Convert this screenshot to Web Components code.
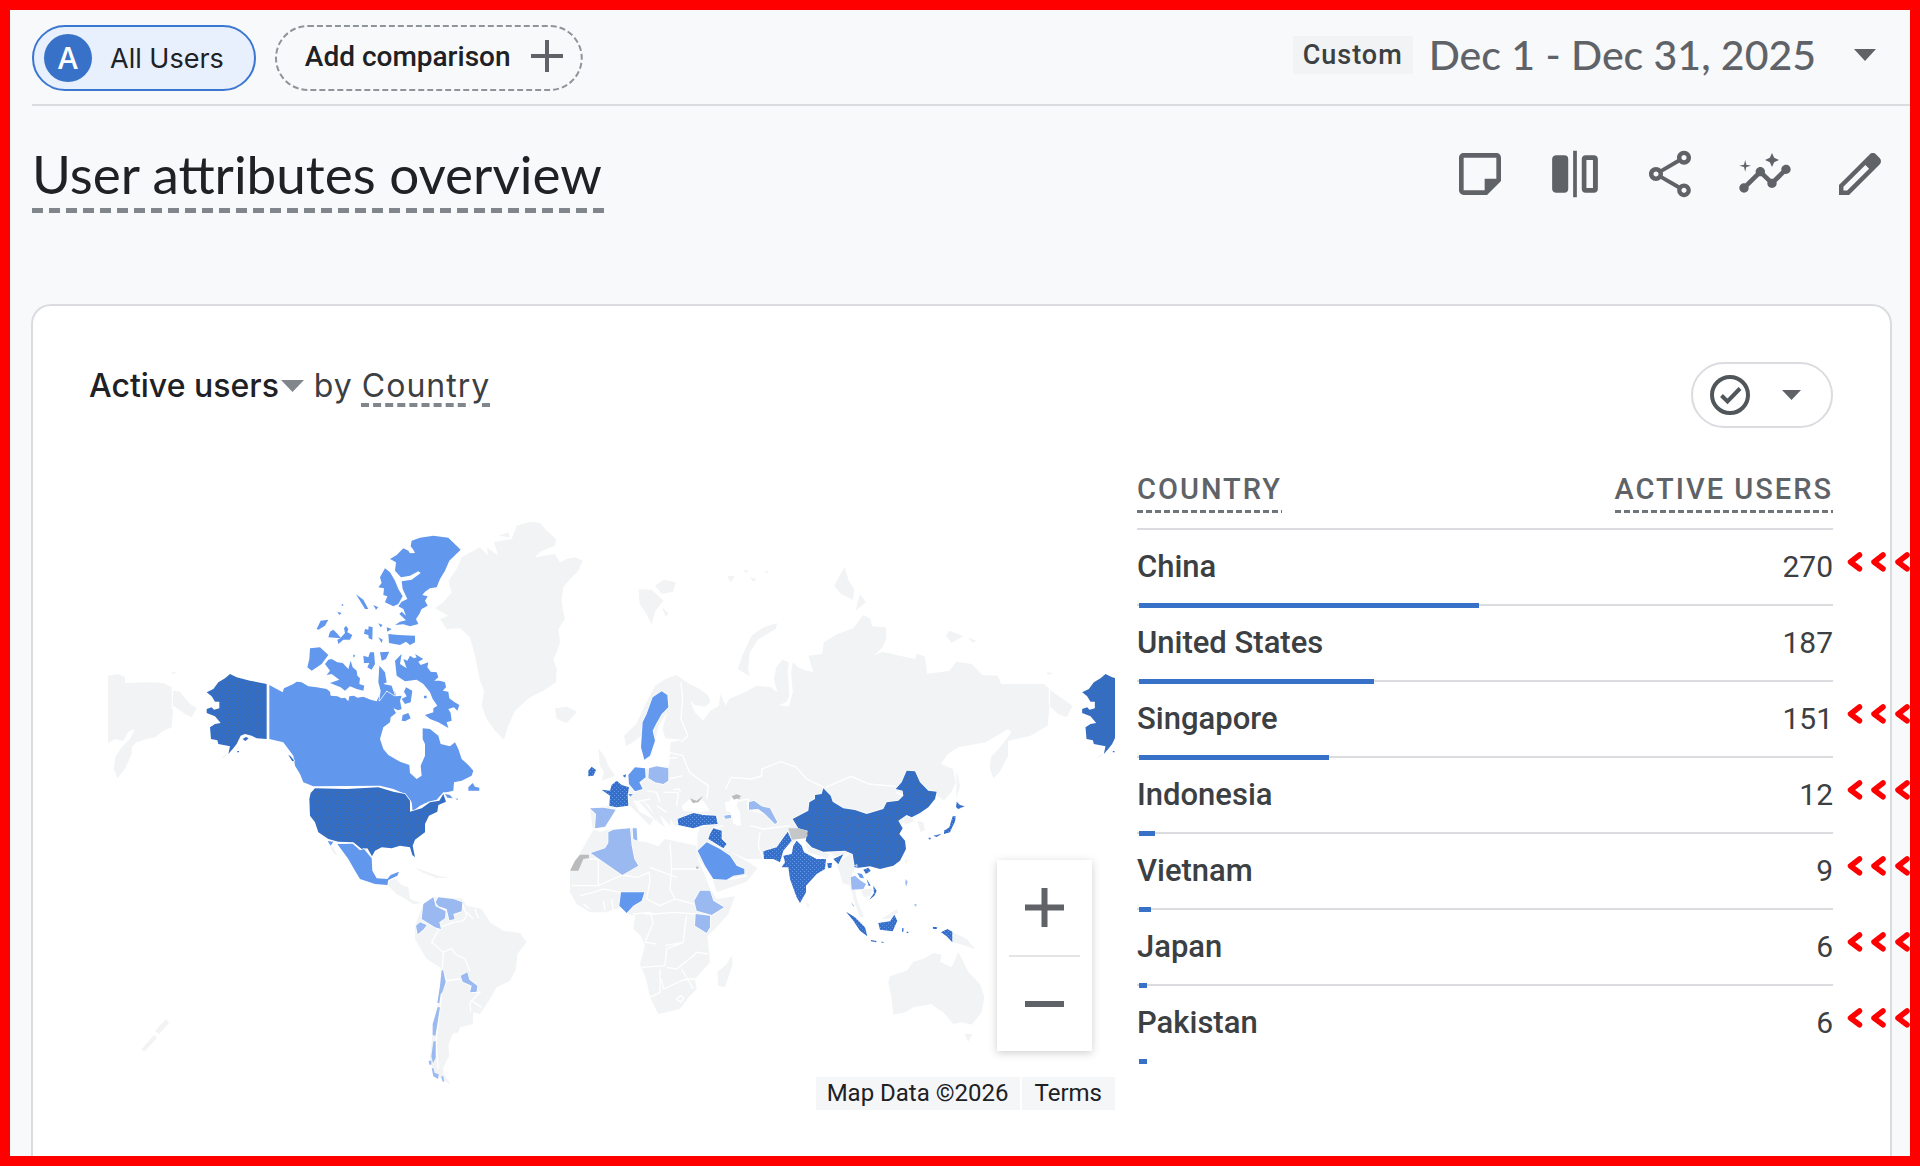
<!DOCTYPE html>
<html lang="en">
<head>
<meta charset="utf-8">
<title>User attributes overview</title>
<style>
html,body{margin:0;height:100%}
body{font-family:Roboto,"Liberation Sans",sans-serif;color:#202124}
</style>
</head>
<body>
<ga-page>
  <ga-topbar slot="top">
    <ga-chip slot="chips" initial="A">All Users</ga-chip>
    <ga-chip slot="chips" add>Add comparison</ga-chip>
    <ga-date-range label="Custom">Dec 1 - Dec 31, 2025</ga-date-range>
  </ga-topbar>
  <ga-title-row slot="top">User attributes overview</ga-title-row>
  <ga-card metric="Active users" dimension="Country">
    <ga-map slot="map"></ga-map>
    <ga-table slot="table"></ga-table>
  </ga-card>
</ga-page>

<script>
const define = (name, html, init) => {
  const template = document.createElement('template');
  template.innerHTML = '<style>*{box-sizing:border-box}button{font:inherit;color:inherit;background:none;border:0;padding:0;margin:0;cursor:pointer}svg{display:block}</style>' + html;
  customElements.define(name, class extends HTMLElement {
    constructor() {
      super();
      this.attachShadow({mode: 'open'}).append(template.content.cloneNode(true));
    }
    connectedCallback() { if (init) init(this, this.shadowRoot); }
  });
};

define('ga-page', `
<style>
:host{display:flex;flex-direction:column;min-height:100vh;border:10px solid #f00;background:#f8f9fb;box-sizing:border-box}
main{flex:1;display:flex;flex-direction:column}
</style>
<slot name="top"></slot><main><slot></slot></main>`);

define('ga-topbar', `
<style>
:host{display:flex;justify-content:space-between;align-items:flex-start;height:96px;margin-left:22px;padding-top:15px;border-bottom:2px solid #dadce0;box-sizing:border-box}
.chips{display:flex;gap:19px}
</style>
<div class="chips"><slot name="chips"></slot></div><slot></slot>`);

define('ga-chip', `
<style>
:host{display:block}
button{display:flex;align-items:center;height:66px;border-radius:33px;font-size:28px;font-weight:500;color:#202124}
.user{border:2px solid #3b76d0;background:#e8f0fe;padding:0 30px 0 10px;gap:18px;font:400 27px Inter,sans-serif}
.user b{display:grid;place-items:center;width:48px;height:48px;border-radius:50%;background:#3871c8;color:#fff;font:500 30px Inter,sans-serif}
svg.ring{position:absolute;inset:0;width:100%;height:100%;overflow:visible}
.add{position:relative;padding:0 20px 4px 30px;gap:20px}
</style>
<button type="button"><slot></slot></button>`, (host, root) => {
  const button = root.querySelector('button');
  if (host.hasAttribute('add')) {
    button.className = 'add';
    button.insertAdjacentHTML('beforeend', '<svg width="32" height="32" viewBox="0 0 32 32"><path d="M16 0V32M0 16H32" stroke="#5f6368" stroke-width="4"/></svg><svg class="ring" viewBox="0 0 308 66" preserveAspectRatio="none"><rect x="1" y="1" width="306" height="64" rx="32" fill="none" stroke="#8f9499" stroke-width="2" stroke-dasharray="6 3"/></svg>');
  } else {
    button.className = 'user';
    const badge = document.createElement('b');
    badge.textContent = host.getAttribute('initial');
    button.prepend(badge);
  }
});

define('ga-date-range', `
<style>
:host{display:block;padding-right:34px}
button{display:flex;align-items:center;height:62px;padding-bottom:2px;color:#5f6368}
.tag{padding:0 10px;line-height:38px;margin-right:16px;background:#f1f3f4;color:#3c4043;font-size:27px;font-weight:500;letter-spacing:1px}
.date{font:500 41px/50px Lato,sans-serif}
svg{margin-left:38px}
</style>
<button type="button"><span class="tag"></span><span class="date"><slot></slot></span><svg width="22" height="12" viewBox="0 0 22 12"><path d="M0 0H22L11 12Z" fill="#5f6368"/></svg></button>`,
(host, root) => { root.querySelector('.tag').textContent = host.getAttribute('label'); });

define('ga-title-row', `
<style>
:host{display:flex;justify-content:space-between;align-items:flex-start;height:198px;padding:36px 22px 0 22px;box-sizing:border-box;color:#202124}
h1{margin:0;padding:0 3px 7px 0;font:400 53px/64px Lato,sans-serif;background:repeating-linear-gradient(90deg,#80868b 0 11px,transparent 11px 17px) left bottom/100% 5px no-repeat}
nav{display:flex;gap:39px;padding-top:4px}
button{width:56px;height:56px}
svg{width:56px;height:56px;fill:#5f6368}
</style>
<h1><slot></slot></h1>
<nav>
<button type="button" aria-label="Notes"><svg viewBox="0 0 24 24"><path d="M19 5v9h-5v5H5V5h14m0-2H5c-1.1 0-2 .9-2 2v14c0 1.100.9 2 2 2h10l6-6V5c0-1.100-.9-2-2-2z"/></svg></button>
<button type="button" aria-label="Compare"><svg viewBox="0 0 24 24"><path d="M11.200 2h1.600v20h-1.600zM4 4h3.500c1 0 1.600.7 1.600 1.600v12.800c0 1-.7 1.600-1.600 1.600H4c-1 0-1.800-.7-1.800-1.600V5.600C2.200 4.700 3 4 4 4zM16.500 4h3.600c1 0 1.700.7 1.700 1.600v12.800c0 1-.7 1.600-1.700 1.600h-3.600c-1 0-1.600-.7-1.600-1.600V5.600c0-.9.7-1.600 1.600-1.600zm.4 2v12h2.800V6z" fill-rule="evenodd"/></svg></button>
<button type="button" aria-label="Share"><svg viewBox="0 0 24 24"><path d="M18 16.080c-.76 0-1.440.3-1.960.77L8.910 12.700c.05-.23.09-.46.09-.7s-.04-.47-.09-.7l7.050-4.110c.54.5 1.250.81 2.040.81 1.660 0 3-1.340 3-3s-1.340-3-3-3-3 1.340-3 3c0 .24.040.47.09.7L8.040 9.810C7.500 9.310 6.790 9 6 9c-1.660 0-3 1.340-3 3s1.340 3 3 3c.79 0 1.500-.31 2.040-.81l7.120 4.160c-.05.21-.08.43-.08.65 0 1.610 1.310 2.920 2.920 2.920s2.920-1.310 2.920-2.920-1.310-2.920-2.920-2.920zM18 3.900c.6 0 1.100.5 1.100 1.100s-.5 1.100-1.100 1.100-1.100-.5-1.100-1.100.5-1.100 1.100-1.100zM6 13.100c-.6 0-1.100-.5-1.100-1.100s.5-1.100 1.100-1.100 1.100.5 1.100 1.100-.5 1.100-1.100 1.100zm12 7c-.6 0-1.100-.5-1.100-1.100s.5-1.100 1.100-1.100 1.100.5 1.100 1.100-.5 1.100-1.100 1.100z"/></svg></button>
<button type="button" aria-label="Insights"><svg viewBox="0 0 24 24"><path d="M21 8c-1.450 0-2.260 1.440-1.930 2.510l-3.550 3.560c-.3-.09-.74-.09-1.040 0l-2.550-2.550C12.270 10.450 11.460 9 10 9c-1.450 0-2.270 1.440-1.930 2.520l-4.560 4.550C2.440 15.740 1 16.550 1 18c0 1.100.9 2 2 2 1.450 0 2.260-1.440 1.930-2.510l4.550-4.560c.3.090.74.090 1.040 0l2.550 2.550C12.730 16.550 13.540 18 15 18c1.450 0 2.270-1.440 1.930-2.520l3.560-3.550C21.560 12.260 23 11.450 23 10c0-1.100-.9-2-2-2zM15 9l.94-2.070L18 6l-2.060-.93L15 3l-.92 2.070L12 6l2.080.93zM3.500 11L4 9l2-.5L4 8l-.5-2L3 8l-2 .5L3 9z"/></svg></button>
<button type="button" aria-label="Edit"><svg viewBox="0 0 24 24"><path d="M3 21v-4.300L16.100 3.600c.8-.8 2-.8 2.800 0l1.500 1.500c.8.8.8 2 0 2.800L7.300 21zM4.900 19.100h1.600L15.900 9.700l-1.600-1.600-9.400 9.400z" fill-rule="evenodd"/></svg></button>
</nav>`);

define('ga-card', `
<style>
:host{flex:1;display:block;margin:0 18px 0 21px;padding:56px 57px 0 56px;border:2px solid #dadce0;border-bottom:0;border-radius:20px 20px 0 0;background:#fff;box-sizing:border-box}
header{display:flex;justify-content:space-between;align-items:flex-start}
h2{display:flex;align-items:center;margin:0;font:400 32px/48px Inter,sans-serif;color:#3c4043}
h2 button{display:flex;align-items:center;gap:2px;font-weight:500;color:#202124}
.by,.dim{letter-spacing:1px}
.by{margin:0 9px 0 10px}
.dim{text-decoration:underline dashed #80868b 4px;text-underline-offset:6px}
.state{display:flex;align-items:center;height:66px;width:142px;padding:0 30px 0 16px;justify-content:space-between;border:2px solid #dadce0;border-radius:34px}
.grid{display:grid;grid-template-columns:1007fr 696fr;gap:22px;margin-left:19px}
</style>
<header>
<h2><button type="button"><span class="metric"></span><svg width="23" height="12" viewBox="0 0 23 12"><path d="M0 0H23L11.500 12Z" fill="#80868b"/></svg></button><span class="by">by</span><span class="dim"></span></h2>
<button class="state" type="button" aria-label="Data quality"><svg width="42" height="42" viewBox="0 0 42 42" fill="none" stroke="#50565a" stroke-width="4"><circle cx="21" cy="21" r="18"/><path d="M12.500 21.500L18.500 27.500L31 14.500"/></svg><svg width="19" height="10" viewBox="0 0 19 10"><path d="M0 0H19L9.500 10Z" fill="#5f6368"/></svg></button>
</header>
<div class="grid"><slot name="map"></slot><slot name="table"></slot></div>`, (host, root) => {
  root.querySelector('.metric').textContent = host.getAttribute('metric');
  root.querySelector('.dim').textContent = host.getAttribute('dimension');
});

define('ga-table', `
<style>
:host{display:block}
table{width:100%;border-collapse:separate;border-spacing:0;color:#3c4043}
th,td{padding:0;text-align:left;border-bottom:2px solid #dadce0;vertical-align:top}
th:last-child,td{text-align:right}
thead th{height:102px;padding-top:44px;font-size:29px;line-height:34px;font-weight:500;letter-spacing:2px;color:#5f6368}
thead span{display:inline-block;padding-bottom:7px;background:repeating-linear-gradient(90deg,#70757a 0 6px,transparent 6px 9px) left bottom/100% 3px no-repeat}
tbody tr{position:relative}
tbody th,tbody td{height:76px;padding-top:17px;font-size:30px;line-height:40px}
tbody th{font-size:31px;font-weight:500}
tbody td{font-weight:400}
tbody tr:last-child>*{border-bottom-color:transparent}
.bar{position:absolute;left:2px;bottom:-2px;height:5px;background:#3871c8}
.mark{position:absolute;left:calc(100% + 14px);top:22px;overflow:visible}
</style>
<table><thead><tr><th scope="col"><span>COUNTRY</span></th><th scope="col"><span>ACTIVE USERS</span></th></tr></thead><tbody></tbody></table>`, (host, root) => {
  const rows = [['China', 270, 340, 1], ['United States', 187, 235, 0], ['Singapore', 151, 190, 1], ['Indonesia', 12, 16, 1], ['Vietnam', 9, 12, 1], ['Japan', 6, 8, 1], ['Pakistan', 6, 8, 1]];
  const mark = '<svg class="mark" width="64" height="20" viewBox="0 0 64 20" fill="none" stroke="#f00" stroke-width="5.500" stroke-linecap="round" stroke-linejoin="round"><path d="M12.500 3L3.500 10L12.500 16.800M36 3L27 10L36 16.800M60 3L51 10L60 16.800"/></svg>';
  root.querySelector('tbody').innerHTML = rows.map(([name, users, share, flag]) =>
    `<tr><th scope="row">${name}<div class="bar" style="width:calc(100% * ${share} / 696)"></div></th><td>${users}${flag ? mark : ''}</td></tr>`).join('');
});

define('ga-map', `
<style>
:host{display:block;position:relative}
.world{width:100%;height:auto;overflow:hidden}
.zoom{position:absolute;right:23px;top:432px;width:95px;padding:0 12px;background:#fff;box-shadow:0 2px 8px rgba(60,64,67,.25)}
.zoom button{display:grid;place-items:center;width:100%;height:95px}
.zoom button+button{border-top:2px solid #e4e5e7;height:96px}
.legal{position:absolute;right:0;bottom:0;display:flex;gap:2px;font-size:24px;line-height:33px;color:#202124}
.legal>*{background:#f5f6f8;padding:0 11px;color:inherit;text-decoration:none}
.legal a{padding:0 13px}
.g{fill:#f1f3f4}.c{fill:#6297ee}.l{fill:#99b9f0}.u{fill:url(#dots-dark)}.d{fill:url(#dots-light)}.b{fill:none!important;stroke:#fff;stroke-width:4}
.n{fill:#c4c6c8}
.c,.l,.u,.d{stroke:#fff;stroke-width:4;paint-order:stroke;stroke-linejoin:round}
</style>
<svg class="world" viewBox="108 429 1007 682" role="img" aria-label="Active users by country">
<defs>
<pattern id="dots-dark" width="30" height="24" patternUnits="userSpaceOnUse"><path fill="#346dc4" d="M0 0H30V24H0Z"/><path fill="#586a80" d="M3 3h3v3H3zM18 0h3v3h-3zM9 12h3v3H9zM24 15h3v3h-3z"/></pattern>
<pattern id="dots-light" width="12" height="12" patternUnits="userSpaceOnUse"><path fill="#356fca" d="M0 0H12V12H0Z"/><path fill="#6296e6" d="M0 0h3v3H0zM6 6h3v3H6z"/></pattern>
</defs>
<g transform="translate(600 540) scale(.34439 .33333)">
<path class="g" d="M70 590L105 555L130 500L160 440L190 420L222 408L255 432L290 450L315 470L320 490L305 503L275 498L262 485L275 520L300 545L320 515L345 500L350 465L365 500L375 480L415 462L455 440L495 445L515 460L505 420L512 385L530 362L548 370L545 400L550 470L540 490L520 498L548 503L560 460L555 400L560 370L575 385L600 395L620 400L605 350L645 345L650 310L690 285L735 268L765 228L785 240L790 262L830 265L832 300L820 325L795 350L820 338L870 350L915 360L920 345L943 352L950 405L1015 395L1035 368L1080 375L1110 408L1155 410L1165 435L1290 435L1310 455L1372 500L1355 535L1330 525L1305 500L1300 560L1250 590L1185 605L1185 650L1160 700L1142 718L1132 690L1135 655L1165 620L1195 580L1185 570L1120 610L1040 625L1010 645L990 675L1025 690L1033 730L1020 760L985 800L950 835L945 880L925 880L915 840L880 840L870 900L560 900L430 885L410 860L400 820L385 785L362 790L375 850L330 845L300 800L270 790L235 815L205 815L205 860L180 835L165 805L125 765L120 780L160 830L165 848L120 795L85 770L85 700L130 690L200 682L205 610L240 602L190 598L182 570L195 520L170 560L150 650L120 590L95 610L75 622Z"/>
<path class="g" d="M400 390L415 345L440 290L475 265L515 252L510 270L460 300L435 340L430 390L435 412ZM710 83L722 125L738 150L735 182L700 165L680 140ZM755 165L772 190L742 215ZM1005 290L1015 275L1055 292L1020 312ZM1068 295L1095 307L1080 310ZM370 112L392 110L380 130ZM415 95l15-3l-5 10ZM435 115l20 5l-10 8ZM478 98l12-2l-5 8ZM1298 400l20 2l-18 6ZM1035 692L1045 740L1035 780ZM112 150L150 152L185 185L160 215L150 258L135 225L115 195ZM160 140L185 122L220 130L212 158L180 165ZM180 205L200 225L190 232Z"/>
<path class="b" d="M235 430L240 480L235 540L255 590L235 610M200 640L240 650L260 700L300 730L315 740L310 780M190 660L225 655M240 710L200 720M185 755L230 750L240 780M120 760L150 755L180 790M365 750L380 715L440 720L470 710L470 690L525 668L570 685L600 720L650 745M655 745L730 712L780 735L860 742M1305 440L1305 500M380 790L430 780L430 810M430 810L500 830M860 760L880 770"/>
<path class="n" d="M260 780l35-10l-10 15l-15 8zM385 775l15-6l8 10l-22 5z"/>
</g>
<g transform="translate(100 510) scale(.33333)">
<path class="g" d="M24 500L55 496L75 505L75 522L140 520L190 522L215 535L218 545L240 548L270 585L290 597L275 625L255 615L220 590L215 655L190 665L165 685L140 690L110 700L95 715L95 735L75 780L52 808L42 780L45 745L65 715L90 690L105 660L85 668L70 695L45 690L24 703ZM212 492l20-4l-12 8Z"/>
<path class="b" d="M217 535V600"/>
<path class="c" d="M508 528L548 550L552 538L580 525L590 518L605 520L625 532L650 535L680 540L690 548L692 560L712 562L725 568L735 566L745 577L748 562L762 560L772 566L790 563L812 572L830 577L845 545L855 533L870 530L872 550L885 548L888 562L905 560L900 575L905 600L895 604L880 598L888 612L872 625L870 640L850 655L840 690L850 720L865 738L900 758L928 768L930 792L950 810L965 800L962 770L975 740L975 705L968 690L968 658L990 660L1015 680L1022 705L1050 712L1065 700L1075 720L1085 750L1105 768L1120 785L1115 800L1085 815L1062 820L1060 845L1040 850L1030 850L1010 872L985 878L960 890L938 907L935 880L915 855L880 840L840 830L640 832L610 820L600 795L585 770L580 740L550 700L508 690Z"/>
<path class="c" d="M935 95L960 86L1000 80L1045 86L1082 122L1048 155L1035 185L1020 210L1010 235L990 238L975 248L967 258L983 262L975 275L983 290L965 300L958 315L948 330L955 345L930 352L910 346L885 348L900 338L918 334L898 315L905 308L918 320L910 300L895 292L905 278L922 270L908 240L905 217L935 212L962 192L955 187L930 200L903 205L885 185L888 160L870 150L890 138L910 118L925 125L930 133L945 132L940 122L932 112Z"/>
<path class="c" d="M855 178L870 190L885 215L895 240L908 262L895 285L880 292L855 280L862 262L850 258L852 238L835 235L845 222L840 205ZM865 375L895 378L945 380L945 400L930 408L918 398L900 408L867 402ZM860 355L875 360L862 368ZM768 256L790 272L805 300L795 300ZM820 288L835 295L828 302ZM650 360L662 335L685 332L675 350L655 362ZM712 308L725 312L718 318ZM726 284l5 4l-6 4ZM685 385L690 368L700 362L712 374L722 386L735 372L732 358L738 350L745 360L742 370L757 378L750 392L730 392L715 405L712 392L722 388ZM795 360L805 362L806 352L818 355L817 392L806 388L805 378L792 374ZM835 385L848 392L845 402ZM835 343L848 348L842 355ZM630 418L660 415L685 438L665 465L635 485L622 475L628 450ZM675 465L685 452L695 450L712 460L728 462L745 480L752 455L758 475L770 485L772 500L780 508L778 525L793 530L790 545L770 540L750 532L735 545L722 535L690 522L718 512L695 495L680 498L690 485ZM790 440L805 445L810 430L822 430L825 465L815 482L802 475L808 462L792 462ZM760 436l6 4l-6 6ZM840 430L868 428L858 450L845 455ZM838 470L855 490L860 520L850 525L875 530L885 560L860 545L838 575L842 545L835 520Z"/>
<path class="c" d="M885 455L905 435L900 465L920 478L910 450L922 455L930 440L942 448L950 445L945 435L970 450L955 458L962 468L985 460L982 475L992 488L1010 490L1015 505L1003 515L1020 515L1035 520L1038 535L1028 545L1045 548L1048 568L1062 578L1078 588L1072 605L1062 595L1045 600L1052 612L1055 635L1040 640L1045 657L1015 640L990 630L975 618L1000 610L1000 598L1012 590L998 570L990 550L970 525L950 512L915 517L890 500ZM905 570L920 562L912 548L918 535L937 545L932 580L915 585ZM905 635L908 618L925 612L932 628L915 637ZM972 560l8 0l0 8l-8 0ZM1105 835L1118 822L1125 833L1138 836L1138 845L1105 845ZM1035 855L1050 858L1058 868L1042 866ZM1066 868l8 2l-2 4Z"/>
<g id="alaska"><path class="u" d="M390 495L410 505L450 515L500 525L500 690L470 688L455 680L435 675L422 680L410 705L400 718L385 735L390 712L355 705L352 694L333 690L330 655L345 645L362 642L345 622L320 612L320 600L335 595L342 602L358 598L358 578L345 578L335 562L320 550L340 540L355 520L375 508Z"/><path class="u" d="M428 690l10-6l8 4l-10 8ZM412 726l5 0l0 4l-5 0Z"/><path class="g" d="M385 735L365 750L372 738Z"/></g>
<path class="u" d="M565 738l6 3l12 14l-6 2Z"/>
</g>
<use href="#alaska" transform="translate(975.500 510) scale(.33333)"/>
<g transform="translate(380 510) scale(.33333)">
<path class="g" d="M450 38L480 42L500 65L528 90L525 110L480 128L465 145L525 135L540 160L560 150L585 145L608 155L595 185L575 205L550 235L545 270L548 300L555 330L535 360L540 400L530 430L520 450L530 480L528 520L490 545L450 565L405 605L385 650L372 692L345 665L320 630L305 590L312 545L300 515L295 490L285 440L270 385L240 358L200 360L180 330L205 320L165 298L190 280L215 250L205 215L230 180L245 145L300 115L325 140L320 115L355 140L342 100L395 90L410 50ZM355 80L385 70L390 85ZM525 598L560 593L592 608L560 642L530 630ZM655 718L675 745L685 770L705 800L665 815L672 790L660 770Z"/>
<path class="d" d="M625 785L635 773L648 783L640 800L625 802Z"/>
</g>
<g transform="translate(280 780) scale(.33333)">
<path class="g" d="M430 375L460 355L545 358L560 380L605 390L630 430L670 455L720 462L740 490L712 525L708 570L690 605L650 625L630 660L600 705L580 700L578 735L540 745L535 760L518 765L505 800L508 830L490 865L490 885L512 915L490 905L460 880L450 840L460 740L480 640L487 570L440 540L405 480L405 440ZM330 305L345 298L365 318L385 325L390 360L425 372L400 376L380 362L350 345L322 318ZM400 264L440 278L480 292L510 296L470 297L430 282ZM485 85L495 78L480 100Z"/>
<path class="b" d="M480 445L455 490L490 520L515 508L525 525L555 540L570 575M490 520L487 570L500 605L540 600M570 640L600 640L570 670L572 700M500 605L485 640L478 700L468 790L475 870M548 375L560 410L550 425M560 400L580 420M585 390L595 418M550 425L520 430L480 445M575 665L605 685"/>
<path class="u" d="M105 28L200 30L295 25L340 38L375 45L390 65L390 98L425 88L450 70L478 65L490 45L498 68L475 78L472 98L447 110L435 135L435 160L405 182L398 200L405 235L397 228L390 205L360 200L335 208L305 205L285 215L276 232L262 208L245 210L220 190L175 188L145 180L115 160L105 130L90 110L88 60L92 42Z"/>
<path class="c" d="M172 195L218 194L240 214L252 210L275 238L277 275L290 298L322 300L332 288L357 278L352 290L325 303L322 318L285 315L240 300L225 275L205 240ZM143 186L160 188L152 200Z"/>
<path class="g" d="M148 200L160 205L172 230L162 224Z"/>
<path class="l" d="M430 375L460 355L467 382L497 397L495 418L478 430L483 450L465 445L425 420ZM467 370L475 355L520 360L547 370L545 397L520 405L524 420L508 424L500 390L475 382ZM408 440L420 430L440 438L432 450L413 466ZM542 590L562 580L568 602L592 620L590 638L570 640L575 620L548 608Z"/>
<path d="M485 572L490 575L497 610L487 640L482 645L478 672L472 672L480 620ZM473 685L480 685L472 735L466 770L458 768L458 735ZM460 788l7-2l0 50l-8 16l-5-20ZM446 845l8 0l0 12l-6 0ZM455 868l5 0l4 14l12 4l-2 14l-14-8ZM484 892l6 0l2 18l-5-4Z" fill="#99b9f0"/>
</g>
<g transform="translate(550 660) scale(.33333)">
<path class="g" d="M120 448L178 440L180 410L237 385L300 365L390 400L460 400L480 450L540 460L560 500L720 480L740 545L640 600L590 600L545 580L525 570L600 612L622 628L590 668L500 700L488 660L440 590L443 560L440 512L430 508L375 500L355 470L330 470L345 505L325 490L300 445L275 420L250 425L270 460L310 480L300 500L235 435L200 447L180 480L165 505L128 508Z"/>
<path class="g" d="M130 512L150 518L175 512L255 505L262 545L290 550L325 562L345 540L400 552L440 560L440 590L465 650L480 690L500 720L555 712L535 765L500 805L472 830L480 910L435 960L440 990L415 1015L390 1050L325 1065L300 1015L290 965L270 915L285 860L272 830L250 810L255 770L235 765L210 745L170 760L120 760L80 735L60 700L60 640L80 600L100 565ZM545 890L548 915L525 985L505 980L502 940L530 915Z"/>
<path fill="#fff" d="M395 440L420 420L460 425L480 455L440 460L400 455ZM545 415L565 420L560 440L570 460L572 500L550 495L545 460L530 440ZM435 500L450 500L440 540L430 540Z"/>
<path class="b" d="M145 680L145 600L120 600M145 680L65 680M145 590L122 582M217 648L145 680M217 648L262 655L298 640L300 665L290 720M300 625L380 655M360 550L365 630L450 630M365 630L360 690L375 720L430 735M290 720L330 740L375 720M285 765L310 765L375 760L435 765M250 765L300 760L310 790L285 850L320 855M410 770L405 800L400 850L350 870L345 920L275 925M345 860L400 850M350 925L380 930L430 890L440 880L475 885M330 930L330 1000L300 1015M335 960L340 990L395 965L415 960L440 960M395 930L430 990M90 710L130 700L160 690L210 700M100 735L120 750M160 725L165 755M185 720L190 755M380 1020l12-10l10 8l-10 12zM250 430L300 420M290 395L320 400L330 430M340 400L385 400L380 440M320 440L350 460M490 508L520 500M600 500L640 510L720 500M630 520L625 560L640 600M490 660L545 660L590 650"/>
<path class="d" d="M200 365L215 378L237 385L233 410L235 440L200 445L178 440L180 410L155 392L180 395L185 378Z"/>
<path class="l" d="M120 448L160 446L197 452L180 480L165 503L135 508L138 465ZM297 328L320 322L355 328L355 365L340 375L315 370L295 357ZM597 430L612 425L635 442L660 448L682 490L675 495L645 465L625 450L597 452ZM522 470l20-3l2 10l-18 2ZM175 520L190 512L240 508L245 560L253 600L265 620L217 648L122 582L165 568L175 552ZM248 508L260 508L262 545L250 540ZM450 695L480 695L490 725L522 745L485 768L440 755L433 725ZM437 765L480 770L480 805L470 822L435 800Z"/>
<path class="c" d="M235 348L255 325L285 328L287 355L268 370L278 390L255 397L237 375ZM335 97L352 108L355 145L335 165L318 195L308 215L315 245L300 290L283 302L273 265L278 190L290 165L308 115ZM213 700L283 700L275 725L250 740L230 762L208 740ZM443 575L470 550L510 570L540 590L560 620L583 630L583 645L550 650L530 662L490 660L465 620ZM235 405l14 0l-8 8Z"/>
<path class="d" d="M383 480L430 462L460 468L498 470L503 495L460 498L430 508L385 498ZM490 508L515 515L515 540L530 555L520 568L475 540L480 525ZM218 350l10-4l-2 10Z"/>
<path fill="#b9bbbd" d="M90 587L117 587L117 597L100 600L85 635L60 635L75 605ZM420 418L440 425L460 410L445 430L428 432ZM545 412L560 406L575 412L552 422ZM440 620l8 8l-10 2Z"/>
</g>
<g transform="translate(740 740) scale(.33333)">
<path fill="#fff" d="M60 350L100 380L150 400L180 500L330 500L300 400L280 372L200 350ZM485 275L540 200L570 160L590 170L640 200L600 300L500 300Z"/>
<path class="g" d="M590 155L575 190L540 225L515 240L525 245L500 255L485 250L510 225L570 165L600 150ZM532 245L550 250L555 272L542 280ZM290 375L335 340L345 388L335 410L345 450L350 480L372 535L360 535L345 495L330 440L308 432L300 405ZM362 452L398 448L392 470L372 475ZM425 540L470 510L475 520L450 540ZM637 578L680 600L705 630L660 615L637 610ZM445 730L450 712L500 695L520 668L550 660L580 642L605 648L600 668L635 685L655 640L670 668L685 700L720 735L733 775L725 820L695 857L665 850L640 855L610 820L590 808L575 795L520 805L495 820L460 827L455 780ZM673 885L697 885L685 908ZM198 490l10 8l-4 10ZM494 365l8-6l-4 22ZM270 340L300 330L330 335L310 352L280 350ZM195 308L215 328L270 345L262 358L205 340Z"/>
<path class="u" d="M250 148L272 170L278 188L310 208L345 213L380 225L430 210L440 190L475 185L490 170L488 155L467 150L485 130L500 95L525 97L540 130L565 155L590 158L585 180L565 205L540 222L515 235L500 228L475 245L488 268L478 285L495 305L498 330L480 365L460 380L420 390L390 382L345 388L338 345L315 335L250 338L215 325L197 305L203 275L175 268L158 240L205 215L208 190L225 180L225 168L245 165Z"/>
<path class="d" d="M70 337L110 325L143 278L155 305L130 335L120 370L100 360L72 360ZM170 305L185 320L192 340L230 360L258 360L255 390L230 405L198 440L198 460L180 492L170 475L150 420L145 385L125 385L135 370L130 350L155 345L160 320ZM262 372l14 0l-2 14l-10 2ZM280 360L310 346L295 376ZM370 392L385 386L392 396L378 405ZM400 440L410 455L403 470L388 482L402 462ZM380 420L392 440L386 440ZM650 188L660 198L674 202L655 210L648 205ZM638 232L647 232L645 248L638 262L630 280L612 285L612 275L628 265ZM580 290L605 284L590 294ZM566 296l6 0l0 5l-6 0ZM318 518L345 535L375 565L382 592L360 575L340 545ZM415 552L450 547L463 527L472 545L458 577L420 572ZM393 603L410 606L408 610L393 607ZM425 607l8 4l-8 0ZM603 580L622 570L637 578L637 610L620 592ZM578 564l14 0l-2 6l-10 0ZM486 568l5 0l-1 10l-4 0ZM500 578l5 0l0 4l-5 0Z"/>
<path class="l" d="M332 415L345 410L362 425L378 435L370 450L335 452ZM497 420l6 8l-4 14l-3-8ZM522 496l8 0l-2 8ZM333 488l10 14l-4 0Z"/>
<path class="c" d="M352 402L366 405L372 418L360 416ZM340 382L350 378L350 388Z" stroke-width="2"/>
<path class="n" d="M145 268L175 268L200 275L203 290L195 298L175 300L155 302Z"/>
</g>
<path fill="#f1f3f4" d="M166 1020L169 1024L159 1035L155 1032ZM154 1036L157 1039L145 1052L141 1051Z"/>
</svg>
<div class="zoom"><button type="button" aria-label="Zoom in"><svg width="39" height="39" viewBox="0 0 39 39"><path d="M19.500 0V39M0 19.500H39" stroke="#5f6368" stroke-width="6"/></svg></button><button type="button" aria-label="Zoom out"><svg width="39" height="6" viewBox="0 0 39 6"><path d="M0 3H39" stroke="#5f6368" stroke-width="6"/></svg></button></div>
<div class="legal"><span>Map Data ©2026</span><a href="#terms">Terms</a></div>`);
</script>
</body>
</html>
